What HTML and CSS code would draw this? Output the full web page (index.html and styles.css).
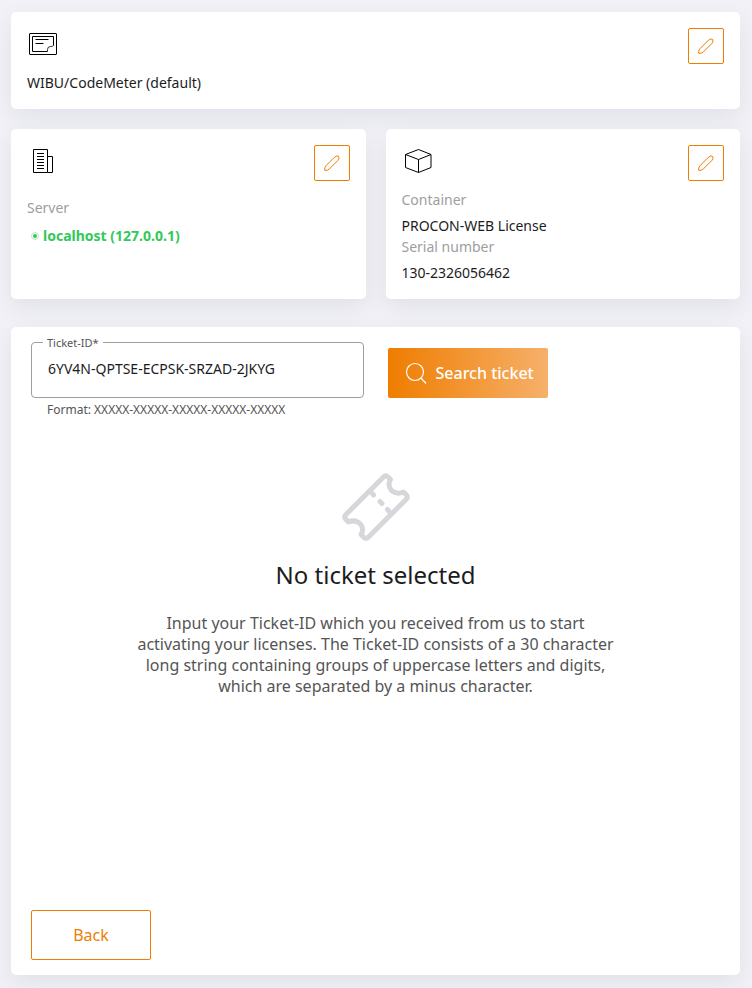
FILE: index.html
```
<!doctype html>
<html lang="en">
<head>
    <meta charset="utf-8">
    <title>License activation</title>
    <link rel="stylesheet" href="styles.css">
</head>

<body>
<svg class="sprite" aria-hidden="true">
    <symbol id="pencil" viewBox="0 0 18 18">
        <path d="M1.700 16.300Q1.300 13.500 3 11.700L11.700 3Q13.800 1.300 15.600 2.400Q16.700 4.200 15 6.300L6.300 15Q4.500 16.700 1.700 16.300Z"/>
    </symbol>
</svg>
<div class="page">
    <section class="card">
        <div class="card-head">
            <svg class="icon" viewBox="0 0 32 32">
                <rect x="2.500" y="5.500" width="27" height="21" rx=".5"/>
                <path d="M20.500 23.500h-15v-15h21v9M8.500 11.500h13M8.500 15.500h8"/>
                <path class="thin" d="M20.500 23.500v-2q0-3 3-3q2.500 0 3-1"/>
            </svg>
            <button class="edit" type="button" aria-label="Edit license system"><svg><use href="#pencil"/></svg></button>
        </div>
        <div class="value">WIBU/CodeMeter (default)</div>
    </section>

    <div class="cards">
        <section class="card">
            <div class="card-head">
                <svg class="icon" viewBox="0 0 32 32">
                    <path d="M6.500 4.500h14v23h-14zM20.500 11.500h5v16h-5"/>
                    <path d="M10 8.500h7M10 11.500h7M10 14.500h7M10 17.500h7M10 20.500h7M10 23.500h7"/>
                </svg>
                <button class="edit" type="button" aria-label="Edit server"><svg><use href="#pencil"/></svg></button>
            </div>
            <div class="server">
                <div class="label">Server</div>
                <div class="status"><span class="dot"></span>localhost (127.0.0.1)</div>
            </div>
        </section>

        <section class="card">
            <div class="card-head">
                <svg class="icon" viewBox="0 0 32 32">
                    <path d="M16.500 4.500l12.500 5v13l-12.500 5l-13-5v-13zM3.500 9.500l13 5l12.500-5M16.500 14.500v13"/>
                </svg>
                <button class="edit" type="button" aria-label="Edit container"><svg><use href="#pencil"/></svg></button>
            </div>
            <dl class="details">
                <dt class="label">Container</dt>
                <dd>PROCON-WEB License</dd>
                <dt class="label">Serial number</dt>
                <dd>130-2326056462</dd>
            </dl>
        </section>
    </div>

    <main class="card ticket">
        <form class="search">
            <div class="field">
                <label for="ticket-id">Ticket-ID*</label>
                <input id="ticket-id" type="text" value="6YV4N-QPTSE-ECPSK-SRZAD-2JKYG" aria-describedby="ticket-hint">
                <div class="hint" id="ticket-hint">Format: XXXXX-XXXXX-XXXXX-XXXXX-XXXXX</div>
            </div>
            <button class="btn-primary" type="button">
                <svg viewBox="0 0 24 24"><circle cx="11" cy="11" r="8.500"/><path d="M17 17L22 22.500"/></svg>
                Search ticket
            </button>
        </form>

        <div class="empty">
            <svg class="ticket-icon" viewBox="0 0 72 72">
                <path d="M5.500 44L44 5.500Q46 4 48 6L50.500 8.500Q47 14 51.500 19.500Q57 24 63.500 21L66.500 24Q68 26 66.500 28L28 66.500Q26 68.500 24 66.500L21 63.500Q24.500 58 20.500 53Q15 48 8.500 51L5.500 48Q4 46 5.500 44Z"/>
                <path d="M31 21L33.500 24M40 30.500L42 32.500M47.500 38.500L50 41.500"/>
            </svg>
            <h1>No ticket selected</h1>
            <p>Input your Ticket-ID which you received from us to start activating your licenses. The Ticket-ID consists of a 30 character long string containing groups of uppercase letters and digits, which are separated by a minus character.</p>
        </div>

        <button class="btn-outline" type="button">Back</button>
    </main>
</div>
</body>
</html>
```
FILE: styles.css
```
*{
    margin: 0;
    padding: 0;
    box-sizing: border-box;
}
body{
    background: #f1f1f7;
    color: #1c1c1e;
    font: 14px/21px "Noto Sans", sans-serif;
}
button, input{
    font-family: inherit;
}
svg{
    fill: none;
    stroke: currentColor;
}
.sprite{
    position: absolute;
    width: 0;
    height: 0;
}

.page{
    display: flex;
    flex-direction: column;
    min-height: 100vh;
    padding: 12px 12px 13px 11px;
}
.card{
    padding: 16px;
    background: #fff;
    border-radius: 5px;
    box-shadow: 0 8px 24px rgba(20, 20, 40, .07);
}
.cards{
    display: grid;
    grid-template-columns: 1fr 1fr;
    gap: 20px;
    margin: 20px 0 28px;
}
.card-head{
    display: flex;
    justify-content: space-between;
    align-items: flex-start;
    height: 44px;
}
.icon{
    width: 32px;
    height: 32px;
    color: #000;
    stroke-linejoin: round;
}
.thin{
    stroke-width: .8;
}
.edit{
    display: flex;
    align-items: center;
    justify-content: center;
    width: 36px;
    height: 36px;
    background: #fff;
    border: 1px solid #ef7d00;
    border-radius: 2px;
    color: #ef7d00;
    cursor: pointer;
}
.edit svg{
    width: 18px;
    height: 18px;
}

.label{
    color: #9e9e9e;
}
.details dd{
    margin-top: 5px;
}
.server{
    padding-top: 8px;
}
.status{
    display: flex;
    align-items: center;
    gap: 4px;
    margin-top: 7px;
    padding-left: 4px;
    color: #34c759;
    font-weight: bold;
}
.dot{
    width: 8px;
    height: 8px;
    padding: 1px;
    background: #34c759 content-box;
    border: 1px solid #b5ebc3;
    border-radius: 50%;
}

.ticket{
    display: flex;
    flex-direction: column;
    flex: 1;
    padding: 15px 20px;
}
.search{
    display: grid;
    grid-template-columns: 1fr 1fr;
    gap: 24px;
}
.field{
    position: relative;
}
.field label{
    position: absolute;
    top: -8px;
    left: 12px;
    padding: 0 4px;
    background: #fff;
    color: #555;
    font-size: 11px;
    line-height: 18px;
}
.field input{
    display: block;
    width: 100%;
    height: 56px;
    padding: 0 16px 4px;
    border: 1px solid #9e9e9e;
    border-radius: 4px;
    color: #1c1c1e;
    font-size: 14px;
}
.hint{
    padding: 2px 16px 0;
    color: #555;
    font-size: 12px;
    line-height: 20px;
}
.btn-primary{
    display: flex;
    align-items: center;
    justify-self: start;
    gap: 8px;
    height: 50px;
    margin-top: 6px;
    padding: 0 14px 0 16px;
    background: linear-gradient(90deg, #ef7d00, #f6b06a);
    border: 0;
    border-radius: 2px;
    color: #fff;
    font-size: 16px;
    font-weight: 500;
    cursor: pointer;
}
.btn-primary svg{
    width: 24px;
    height: 24px;
    stroke-width: 1.2;
}

.empty{
    flex: 1;
    width: 490px;
    max-width: 100%;
    margin: 0 auto;
    padding-top: 51px;
    text-align: center;
}
.ticket-icon{
    display: block;
    width: 72px;
    height: 72px;
    margin: 0 auto;
    color: #d6d7da;
    stroke-width: 5;
    stroke-linecap: round;
    stroke-linejoin: round;
}
.empty h1{
    margin-top: 16px;
    font-size: 24px;
    font-weight: 400;
    line-height: 32px;
}
.empty p{
    margin-top: 22px;
    color: #555;
    font-size: 16px;
    line-height: 21px;
}
.btn-outline{
    align-self: flex-start;
    width: 120px;
    height: 50px;
    background: #fff;
    border: 1px solid #ef7d00;
    border-radius: 2px;
    color: #ef7d00;
    font-size: 16px;
    cursor: pointer;
}
```
